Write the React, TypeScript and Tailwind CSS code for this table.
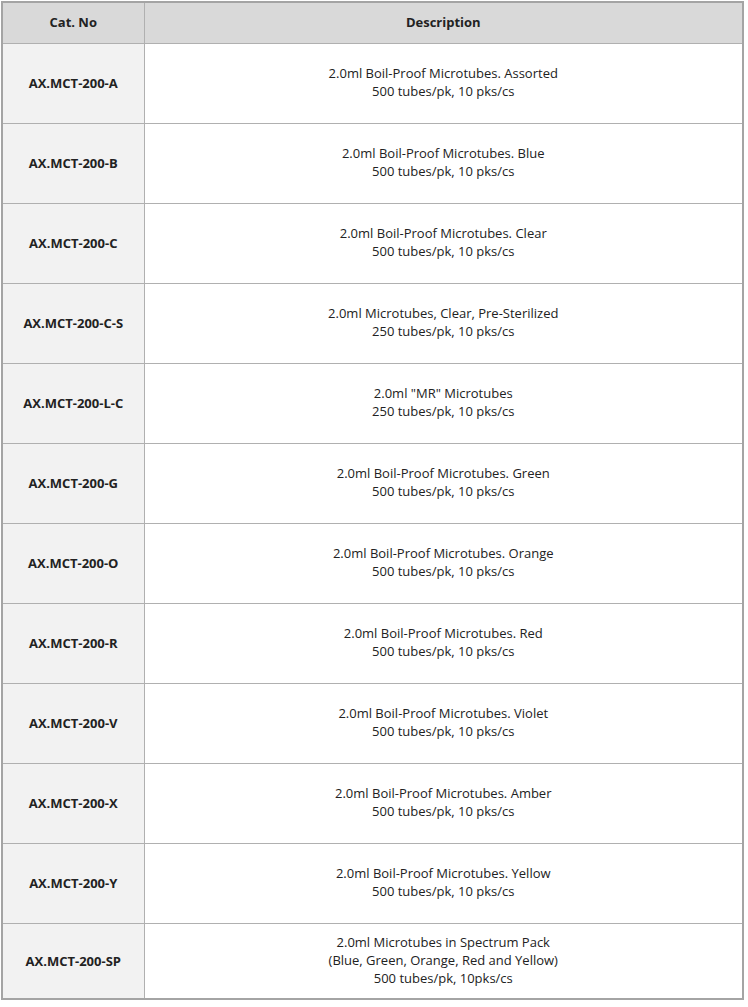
const rows: { cat: string; desc: string[] }[] = [
  { cat: 'AX.MCT-200-A', desc: ['2.0ml Boil-Proof Microtubes. Assorted', '500 tubes/pk, 10 pks/cs'] },
  { cat: 'AX.MCT-200-B', desc: ['2.0ml Boil-Proof Microtubes. Blue', '500 tubes/pk, 10 pks/cs'] },
  { cat: 'AX.MCT-200-C', desc: ['2.0ml Boil-Proof Microtubes. Clear', '500 tubes/pk, 10 pks/cs'] },
  { cat: 'AX.MCT-200-C-S', desc: ['2.0ml Microtubes, Clear, Pre-Sterilized', '250 tubes/pk, 10 pks/cs'] },
  { cat: 'AX.MCT-200-L-C', desc: ['2.0ml "MR" Microtubes', '250 tubes/pk, 10 pks/cs'] },
  { cat: 'AX.MCT-200-G', desc: ['2.0ml Boil-Proof Microtubes. Green', '500 tubes/pk, 10 pks/cs'] },
  { cat: 'AX.MCT-200-O', desc: ['2.0ml Boil-Proof Microtubes. Orange', '500 tubes/pk, 10 pks/cs'] },
  { cat: 'AX.MCT-200-R', desc: ['2.0ml Boil-Proof Microtubes. Red', '500 tubes/pk, 10 pks/cs'] },
  { cat: 'AX.MCT-200-V', desc: ['2.0ml Boil-Proof Microtubes. Violet', '500 tubes/pk, 10 pks/cs'] },
  { cat: 'AX.MCT-200-X', desc: ['2.0ml Boil-Proof Microtubes. Amber', '500 tubes/pk, 10 pks/cs'] },
  { cat: 'AX.MCT-200-Y', desc: ['2.0ml Boil-Proof Microtubes. Yellow', '500 tubes/pk, 10 pks/cs'] },
  {
    cat: 'AX.MCT-200-SP',
    desc: ['2.0ml Microtubes in Spectrum Pack', '(Blue, Green, Orange, Red and Yellow)', '500 tubes/pk, 10pks/cs'],
  },
]

export default function App() {
  return (
    <div className="bg-white pl-px pt-px font-['Open_Sans','Noto_Sans_CJK_KR',sans-serif] text-[13px] leading-[18px] text-[#222]">
      <table className="w-[743px] table-fixed border-collapse border-2 border-[#a4a4a4]">
        <thead>
          <tr className="h-[41px] bg-[#d9d9d9]">
            <th className="w-[142px] border border-[#b0b0b0] pb-[2px] font-bold">Cat. No</th>
            <th className="border border-[#b0b0b0] pb-[2px] font-bold">Description</th>
          </tr>
        </thead>
        <tbody>
          {rows.map((row, i) => (
            <tr key={row.cat} className={i === rows.length - 1 ? 'h-[76px]' : 'h-[80px]'}>
              <td className="border border-[#b0b0b0] bg-[#f2f2f2] text-center font-bold">{row.cat}</td>
              <td className="border border-[#b0b0b0] pb-[2px] text-center">
                {row.desc.map((line) => (
                  <div key={line}>{line}</div>
                ))}
              </td>
            </tr>
          ))}
        </tbody>
      </table>
    </div>
  )
}
